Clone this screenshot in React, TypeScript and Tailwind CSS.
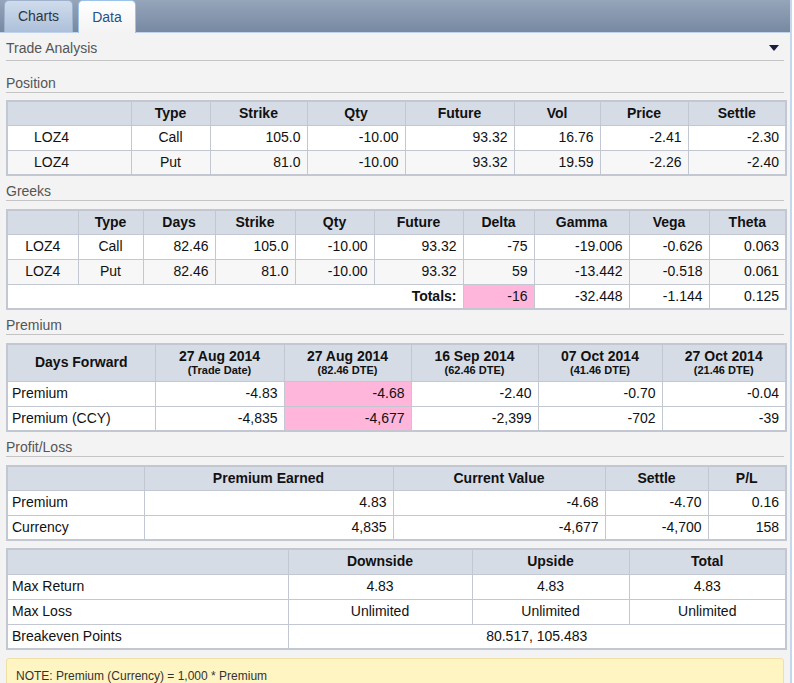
import React from "react";

const th = "border border-[#c3c7d1] bg-[#d6dce5] font-bold text-center p-0 h-[24px]";
const td = "border border-[#c3c7d1] p-0 h-[25px] text-right pr-[6px]";
const tdc = "border border-[#c3c7d1] p-0 h-[25px] text-center";
const tdl = "border border-[#c3c7d1] p-0 h-[25px] text-left pl-[4px]";
const table = "w-full table-fixed border-collapse border-2 border-[#c3c7d1] text-[14px] leading-[17px] text-[#111]";

function SectionTitle({ title }: { title: string }) {
  return (
    <div className="h-[25px] flex items-end border-b border-[#c4c4c4] text-[14px] leading-[17px] text-[#555]">
      {title}
    </div>
  );
}

function Cols({ widths }: { widths: number[] }) {
  return (
    <colgroup>
      {widths.map((w, i) => (
        <col key={i} style={{ width: w }} />
      ))}
    </colgroup>
  );
}

export default function App() {
  const position = [
    ["LOZ4", "Call", "105.0", "-10.00", "93.32", "16.76", "-2.41", "-2.30"],
    ["LOZ4", "Put", "81.0", "-10.00", "93.32", "19.59", "-2.26", "-2.40"],
  ];
  const greeks = [
    ["LOZ4", "Call", "82.46", "105.0", "-10.00", "93.32", "-75", "-19.006", "-0.626", "0.063"],
    ["LOZ4", "Put", "82.46", "81.0", "-10.00", "93.32", "59", "-13.442", "-0.518", "0.061"],
  ];
  const dates = [
    ["27 Aug 2014", "(Trade Date)"],
    ["27 Aug 2014", "(82.46 DTE)"],
    ["16 Sep 2014", "(62.46 DTE)"],
    ["07 Oct 2014", "(41.46 DTE)"],
    ["27 Oct 2014", "(21.46 DTE)"],
  ];
  const premium = [
    ["Premium", "-4.83", "-4.68", "-2.40", "-0.70", "-0.04"],
    ["Premium (CCY)", "-4,835", "-4,677", "-2,399", "-702", "-39"],
  ];

  return (
    <div className="w-[793px] bg-white font-['Liberation_Sans',Arial,sans-serif]">
      <div className="w-[792px] min-h-[700px] bg-[#f3f3f3] border-r-2 border-[#c6d7ec]">
        {/* tabs */}
        <div className="h-[33px] flex items-end gap-[5px] pl-[4px] bg-gradient-to-b from-[#95a5ba] to-[#7789a2] border-b border-[#bfd2ea]">
          <div className="h-[32px] w-[69px] flex items-center justify-center rounded-t-[5px] bg-gradient-to-b from-[#cfdcec] to-[#adc0da] border border-b-0 border-[#9fb2cb] text-[14px] text-[#2d3640]">
            Charts
          </div>
          <div className="h-[33px] -mb-px w-[58px] flex items-center justify-center rounded-t-[5px] bg-gradient-to-b from-white to-[#f3f3f3] border border-b-0 border-[#9cc3ea] text-[14px] text-[#245287]">
            Data
          </div>
        </div>

        <div className="px-[6px] pb-[20px]">
          <div className="h-[28px] flex items-end justify-between pb-[3px] border-b border-[#c4c4c4] text-[14px] leading-[17px] text-[#555]">
            <span>Trade Analysis</span>
            <svg width="10" height="6" viewBox="0 0 10 6" className="mr-[5px] mb-[6px]">
              <path d="M0 0 H10 L5 6 Z" fill="#1c1c3c" />
            </svg>
          </div>

          <div className="h-[7px]" />
          <SectionTitle title="Position" />
          <div className="mt-[7px]">
            <table className={table}>
              <Cols widths={[124, 79, 97, 98, 109, 86, 88, 98]} />
              <thead>
                <tr>
                  <th className={th}></th>
                  {["Type", "Strike", "Qty", "Future", "Vol", "Price", "Settle"].map((h) => (
                    <th key={h} className={th}>{h}</th>
                  ))}
                </tr>
              </thead>
              <tbody>
                {position.map((r, i) => (
                  <tr key={i} className={i === 1 ? "bg-[#f7f7f7]" : "bg-white"}>
                    <td className="border border-[#c3c7d1] p-0 h-[25px] text-left pl-[26px]">{r[0]}</td>
                    <td className={tdc}>{r[1]}</td>
                    {r.slice(2).map((v, j) => (
                      <td key={j} className={td}>{v}</td>
                    ))}
                  </tr>
                ))}
              </tbody>
            </table>
          </div>

          <SectionTitle title="Greeks" />
          <div className="mt-[8px]">
            <table className={table}>
              <Cols widths={[71, 65, 72, 80, 79, 89, 71, 95, 80, 77]} />
              <thead>
                <tr>
                  <th className={th}></th>
                  {["Type", "Days", "Strike", "Qty", "Future", "Delta", "Gamma", "Vega", "Theta"].map((h) => (
                    <th key={h} className={th}>{h}</th>
                  ))}
                </tr>
              </thead>
              <tbody>
                {greeks.map((r, i) => (
                  <tr key={i} className={i === 1 ? "bg-[#f7f7f7]" : "bg-white"}>
                    <td className={tdc}>{r[0]}</td>
                    <td className={tdc}>{r[1]}</td>
                    {r.slice(2).map((v, j) => (
                      <td key={j} className={td}>{v}</td>
                    ))}
                  </tr>
                ))}
                <tr className="bg-white">
                  <td colSpan={6} className={td + " font-bold"}>Totals:</td>
                  <td className={td + " bg-[#ffb6da]"}>-16</td>
                  <td className={td}>-32.448</td>
                  <td className={td}>-1.144</td>
                  <td className={td}>0.125</td>
                </tr>
              </tbody>
            </table>
          </div>

          <SectionTitle title="Premium" />
          <div className="mt-[8px]">
            <table className={table}>
              <Cols widths={[148, 129, 127, 127, 124, 124]} />
              <thead>
                <tr>
                  <th className={th + " h-[37px]"}>Days Forward</th>
                  {dates.map((d, i) => (
                    <th key={i} className={th + " h-[37px]"}>
                      <div className="leading-[16px]">{d[0]}</div>
                      <div className="text-[11px] leading-[13px]">{d[1]}</div>
                    </th>
                  ))}
                </tr>
              </thead>
              <tbody>
                {premium.map((r, i) => (
                  <tr key={i} className="bg-white">
                    <td className={tdl}>{r[0]}</td>
                    {r.slice(1).map((v, j) => (
                      <td key={j} className={td + (j === 1 ? " bg-[#ffb6da]" : "")}>{v}</td>
                    ))}
                  </tr>
                ))}
              </tbody>
            </table>
          </div>

          <SectionTitle title="Profit/Loss" />
          <div className="mt-[8px]">
            <table className={table}>
              <Cols widths={[137, 249, 212, 103, 78]} />
              <thead>
                <tr>
                  <th className={th}></th>
                  {["Premium Earned", "Current Value", "Settle", "P/L"].map((h) => (
                    <th key={h} className={th}>{h}</th>
                  ))}
                </tr>
              </thead>
              <tbody>
                <tr className="bg-white">
                  <td className={tdl}>Premium</td>
                  <td className={td}>4.83</td>
                  <td className={td}>-4.68</td>
                  <td className={td}>-4.70</td>
                  <td className={td}>0.16</td>
                </tr>
                <tr className="bg-white">
                  <td className={tdl}>Currency</td>
                  <td className={td}>4,835</td>
                  <td className={td}>-4,677</td>
                  <td className={td}>-4,700</td>
                  <td className={td}>158</td>
                </tr>
              </tbody>
            </table>
          </div>

          <div className="mt-[7px]">
            <table className={table}>
              <Cols widths={[281, 184, 157, 157]} />
              <thead>
                <tr>
                  <th className={th + " h-[25px]"}></th>
                  <th className={th + " h-[25px]"}>Downside</th>
                  <th className={th + " h-[25px]"}>Upside</th>
                  <th className={th + " h-[25px]"}>Total</th>
                </tr>
              </thead>
              <tbody>
                <tr className="bg-white">
                  <td className={tdl}>Max Return</td>
                  <td className={tdc}>4.83</td>
                  <td className={tdc}>4.83</td>
                  <td className={tdc}>4.83</td>
                </tr>
                <tr className="bg-white">
                  <td className={tdl}>Max Loss</td>
                  <td className={tdc}>Unlimited</td>
                  <td className={tdc}>Unlimited</td>
                  <td className={tdc}>Unlimited</td>
                </tr>
                <tr className="bg-white">
                  <td className={tdl}>Breakeven Points</td>
                  <td colSpan={3} className={tdc}>80.517, 105.483</td>
                </tr>
              </tbody>
            </table>
          </div>

          <div className="mt-[8px] rounded-[3px] border border-[#eee0a6] bg-[#fff5c3] px-[9px] pt-[10px] pb-[14px] text-[12px] leading-[15px] text-[#333]">
            NOTE: Premium (Currency) = 1,000 * Premium
          </div>
        </div>
      </div>
    </div>
  );
}
